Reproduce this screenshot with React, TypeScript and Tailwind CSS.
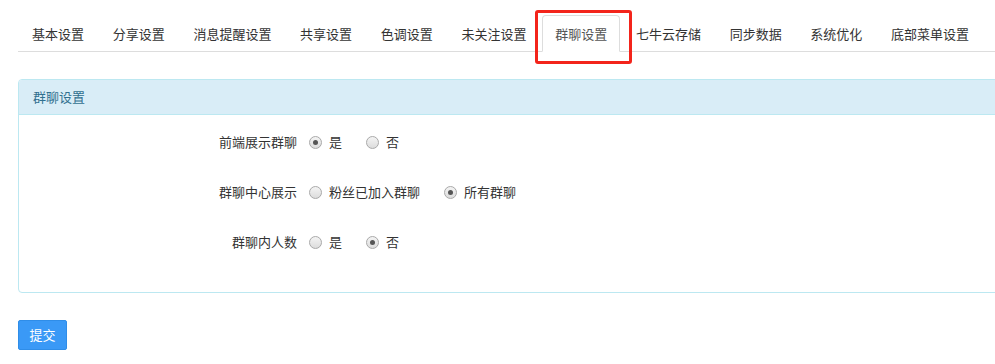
import { useState } from 'react';

const tabs = ['基本设置', '分享设置', '消息提醒设置', '共享设置', '色调设置', '未关注设置', '群聊设置', '七牛云存储', '同步数据', '系统优化', '底部菜单设置'];

type Row = { label: string; name: string; options: string[]; value: number };

const rows: Row[] = [
  { label: '前端展示群聊', name: 'show', options: ['是', '否'], value: 0 },
  { label: '群聊中心展示', name: 'center', options: ['粉丝已加入群聊', '所有群聊'], value: 1 },
  { label: '群聊内人数', name: 'count', options: ['是', '否'], value: 1 },
];

function Radio({ checked }: { checked: boolean }) {
  return (
    <span className="flex h-[13px] w-[13px] items-center justify-center rounded-full border border-[#a9a9a9] bg-gradient-to-b from-[#f4f4f4] to-[#dcdcdc]">
      {checked && <span className="h-[5px] w-[5px] rounded-full bg-[#555]" />}
    </span>
  );
}

function FormRow({ row }: { row: Row }) {
  const [value, setValue] = useState(row.value);
  return (
    <div className="flex h-[50px] items-center">
      <label className="w-[278px] text-right text-[#333]">{row.label}</label>
      <div className="ml-[12px] flex items-center gap-[24px]">
        {row.options.map((opt, i) => (
          <button key={opt} type="button" onClick={() => setValue(i)} className="flex items-center gap-[7px] text-[#333]">
            <Radio checked={value === i} />
            <span>{opt}</span>
          </button>
        ))}
      </div>
    </div>
  );
}

export default function App() {
  const active = '群聊设置';
  return (
    <div className="h-[364px] w-[995px] overflow-hidden bg-white text-[13px] leading-[18px]" style={{ fontFamily: '"Noto Sans CJK SC", "Liberation Sans", sans-serif' }}>
      <ul className="ml-[18px] flex border-b border-[#ddd] pl-[1px] pt-[15px]">
        {tabs.map((t) => (
          <li key={t} className="relative -mb-px mr-[2.7px]">
            <a
              className={
                t === active
                  ? 'flex h-[37px] items-center rounded-t-[4px] border border-[#ddd] border-b-white bg-white px-[12px] text-[#555]'
                  : 'flex h-[37px] items-center border border-transparent px-[12px] text-[#333]'
              }
            >
              {t}
            </a>
            {t === active && (
              <span className="pointer-events-none absolute -bottom-[12px] -left-[7px] -right-[12px] -top-[5px] rounded-[3px] border-[3px] border-[#f3241b]" />
            )}
          </li>
        ))}
      </ul>

      <div className="ml-[18px] mt-[27px] w-[1000px] rounded-[4px] border border-[#bce8f1]">
        <div className="flex h-[35px] items-center rounded-t-[3px] border-b border-[#bce8f1] bg-[#d9edf7] px-[14px] text-[#31708f]">
          群聊设置
        </div>
        <div className="pb-[25px] pt-[2px]">
          {rows.map((r) => (
            <FormRow key={r.name} row={r} />
          ))}
        </div>
      </div>

      <button type="button" className="ml-[18px] mt-[27px] flex h-[30px] w-[49px] items-center justify-center rounded-[2px] border border-[#2f8de8] bg-[#3a99f6] text-white">
        提交
      </button>
    </div>
  );
}
